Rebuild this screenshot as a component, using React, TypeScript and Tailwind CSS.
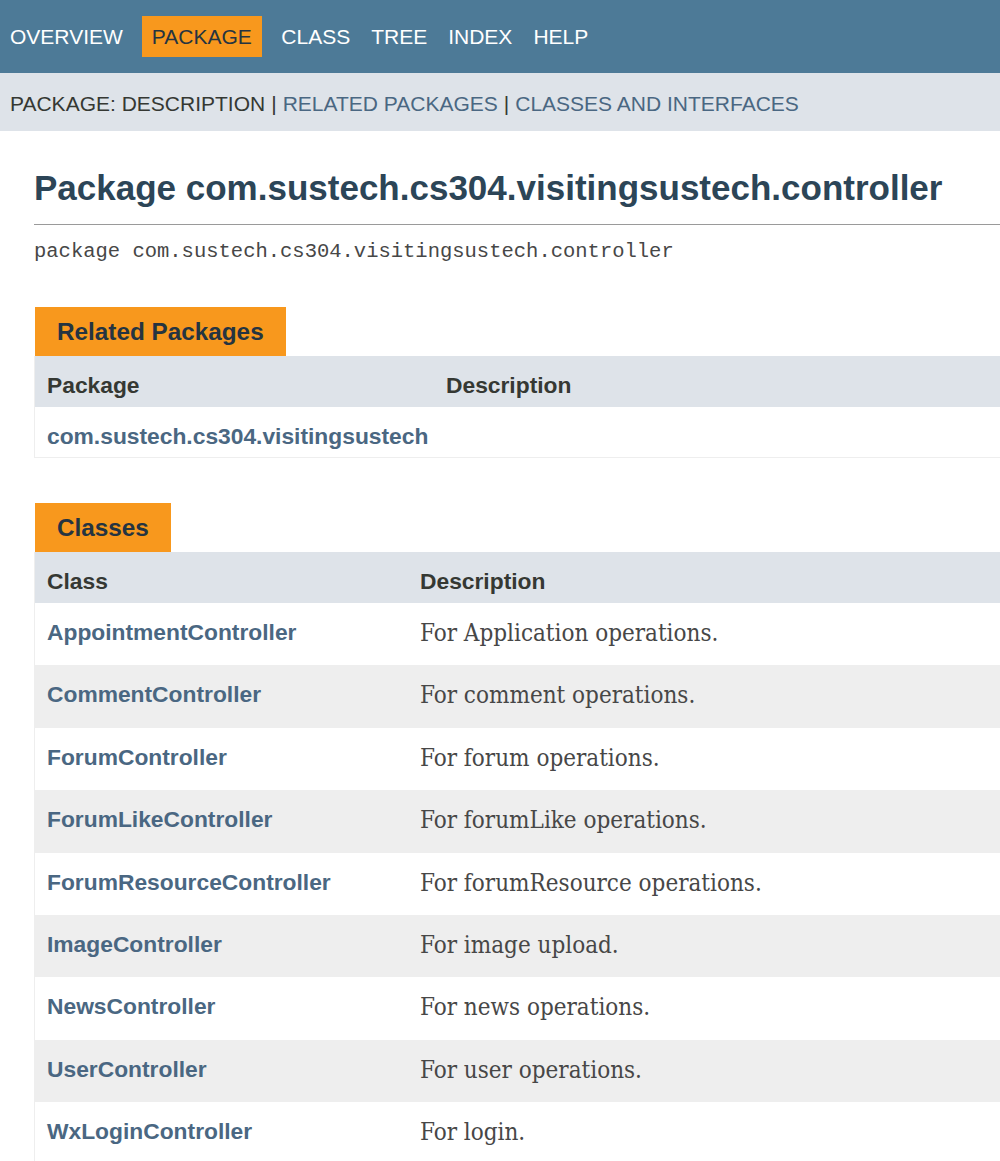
import React from "react";

const classes: [string, string][] = [
  ["AppointmentController", "For Application operations."],
  ["CommentController", "For comment operations."],
  ["ForumController", "For forum operations."],
  ["ForumLikeController", "For forumLike operations."],
  ["ForumResourceController", "For forumResource operations."],
  ["ImageController", "For image upload."],
  ["NewsController", "For news operations."],
  ["UserController", "For user operations."],
  ["WxLoginController", "For login."],
];

export default function App() {
  const sans = { fontFamily: '"Liberation Sans", Arial, sans-serif' };
  return (
    <div className="w-[1000px] min-h-[1161px] bg-white overflow-hidden" style={sans}>
      {/* Top nav */}
      <div className="h-[73px] bg-[#4d7a97] flex items-center text-[21px] text-white leading-none">
        <span className="pl-[10px] pr-[10px]">OVERVIEW</span>
        <span className="ml-[9px] mr-[9px] px-[10px] h-[41px] flex items-center bg-[#f8981d] text-[#253441]">PACKAGE</span>
        <span className="px-[10.5px]">CLASS</span>
        <span className="px-[10.5px]">TREE</span>
        <span className="px-[10.5px]">INDEX</span>
        <span className="px-[10.5px]">HELP</span>
      </div>
      {/* Sub nav */}
      <div className="h-[58px] bg-[#dee3e9] flex items-center pl-[10px] pt-[3px] text-[21px] text-[#353833] leading-none">
        <span>PACKAGE: DESCRIPTION</span>
        <span className="px-[6px]">|</span>
        <span className="text-[#4a6782]">RELATED PACKAGES</span>
        <span className="px-[6px]">|</span>
        <span className="text-[#4a6782]">CLASSES AND INTERFACES</span>
      </div>

      <div className="pl-[34px]">
        <h1 className="mt-[36px] text-[35px] leading-[42px] font-bold text-[#2c4557] pb-[15px] border-b border-[#9a9a9a] whitespace-nowrap">
          Package com.sustech.cs304.visitingsustech.controller
        </h1>
        <div
          className="mt-[12px] text-[20.5px] leading-[29px] text-[#474747] whitespace-nowrap"
          style={{ fontFamily: '"Liberation Mono", "Courier New", monospace' }}
        >
          package com.sustech.cs304.visitingsustech.controller
        </div>

        {/* Related Packages */}
        <div className="mt-[41px]">
          <div className="inline-flex h-[49px] items-center pt-[2px] px-[22px] bg-[#f8981d] text-[24.3px] font-bold text-[#253441] ml-[1px]">
            Related Packages
          </div>
          <div className="grid grid-cols-[399px_1fr] border-l border-b border-[#eeeeee] text-[22.8px] leading-[31px]">
            <div className="h-[51px] bg-[#dee3e9] pl-[12px] pt-[14px] font-bold text-[#353833]">Package</div>
            <div className="h-[51px] bg-[#dee3e9] pl-[12px] pt-[14px] font-bold text-[#353833]">Description</div>
            <div className="h-[50px] pl-[12px] pt-[14px] font-bold text-[#4a6782] whitespace-nowrap">com.sustech.cs304.visitingsustech</div>
            <div className="h-[50px]"></div>
          </div>
        </div>

        {/* Classes */}
        <div className="mt-[45px]">
          <div className="inline-flex h-[49px] items-center pt-[2px] px-[22px] bg-[#f8981d] text-[24.3px] font-bold text-[#253441] ml-[1px]">
            Classes
          </div>
          <div className="grid grid-cols-[373px_1fr] border-l border-[#eeeeee] text-[22.8px] leading-[31px]">
            <div className="h-[51px] bg-[#dee3e9] pl-[12px] pt-[14px] font-bold text-[#353833]">Class</div>
            <div className="h-[51px] bg-[#dee3e9] pl-[12px] pt-[14px] font-bold text-[#353833]">Description</div>
            {classes.map(([name, desc], i) => (
              <React.Fragment key={name}>
                <div
                  className={`h-[62.4px] pl-[12px] pt-[14px] font-bold text-[#4a6782] ${i % 2 === 1 ? "bg-[#eeeeee]" : "bg-white"}`}
                >
                  {name}
                </div>
                <div
                  className={`h-[62.4px] pl-[12px] pt-[15px] text-[24px] leading-[31px] text-[#474747] font-stretch-condensed ${i % 2 === 1 ? "bg-[#eeeeee]" : "bg-white"}`}
                  style={{ fontFamily: '"DejaVu Serif", Georgia, serif' }}
                >
                  {desc}
                </div>
              </React.Fragment>
            ))}
          </div>
        </div>
      </div>
    </div>
  );
}
